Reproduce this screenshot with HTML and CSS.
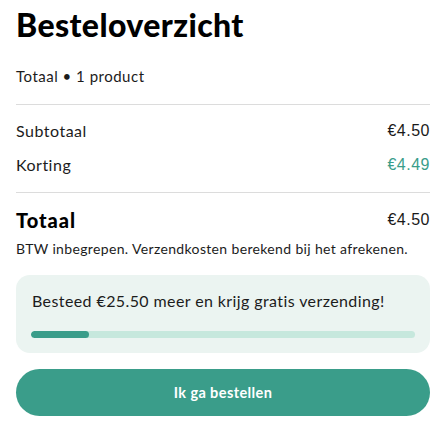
FILE: index.html
```html
<!DOCTYPE html>
<html lang="nl">
<head>
<meta charset="utf-8">
<title>Besteloverzicht</title>
<link rel="stylesheet" href="styles.css">
</head>
<body>
<main class="summary">
  <h1 class="title">Besteloverzicht</h1>
  <p class="count">Totaal • 1 product</p>
  <div class="lines">
    <div class="row"><span>Subtotaal</span><span class="price">€4.50</span></div>
    <div class="row"><span>Korting</span><span class="price discount">€4.49</span></div>
  </div>
  <div class="row total"><span class="total-label">Totaal</span><span class="price">€4.50</span></div>
  <p class="note">BTW inbegrepen. Verzendkosten berekend bij het afrekenen.</p>
  <div class="shipping">
    <p class="shipping-text">Besteed €25.50 meer en krijg gratis verzending!</p>
    <div class="bar"><div class="bar-fill" style="width:15%"></div></div>
  </div>
  <button class="checkout">Ik ga bestellen</button>
</main>
</body>
</html>
```
FILE: styles.css
```css
html, body { margin: 0; padding: 0; background: #fff; }
body {
  font-family: Lato, "Noto Sans", sans-serif;
  color: #1c1c1c;
}
.summary {
  padding: 5px 5px 0 16px;
}
.title {
  margin: 0;
  font-size: 32px;
  line-height: 40px;
  font-weight: 900;
  color: #000;
  letter-spacing: 0.4px;
}
.count {
  margin: 21px 0 0;
  font-size: 15px;
  line-height: 20px;
  letter-spacing: 0.5px;
}
.lines {
  margin-top: 18px;
  border-top: 1px solid #dcdcdc;
  border-bottom: 1px solid #dcdcdc;
  padding: 14px 0 15px;
  display: flex;
  flex-direction: column;
  gap: 10px;
}
.row {
  display: flex;
  justify-content: space-between;
  align-items: center;
  font-size: 16px;
  line-height: 24px;
  letter-spacing: 0.5px;
}
.price {
  font-family: "Liberation Sans", Arial, sans-serif;
  font-size: 16px;
  letter-spacing: 0.5px;
  color: #1a1a1a;
}
.discount { color: #3a9d8a; }
.total { margin-top: 15px; }
.total-label {
  font-size: 20px;
  font-weight: 900;
  color: #000;
  letter-spacing: 1px;
}
.note {
  margin: 7px 0 0;
  font-size: 14px;
  line-height: 20px;
  letter-spacing: 0.35px;
}
.shipping {
  margin-top: 16px;
  background: #ebf4f1;
  border-radius: 14px;
  padding: 16px 15px 15px;
}
.shipping-text {
  margin: 0;
  font-size: 16px;
  line-height: 20px;
  padding-left: 1px;
  letter-spacing: 0.4px;
}
.bar {
  margin-top: 20px;
  height: 7px;
  border-radius: 4px;
  background: #c6e8dd;
  overflow: hidden;
}
.bar-fill {
  height: 100%;
  border-radius: 4px;
  background: #3a9d8a;
}
.checkout {
  display: block;
  width: 100%;
  margin-top: 16px;
  height: 47px;
  border: 0;
  border-radius: 24px;
  background: #3a9d8a;
  color: #fff;
  font-family: Lato, "Noto Sans", sans-serif;
  font-size: 14.5px;
  font-weight: 700;
  letter-spacing: 0.4px;
}
```
